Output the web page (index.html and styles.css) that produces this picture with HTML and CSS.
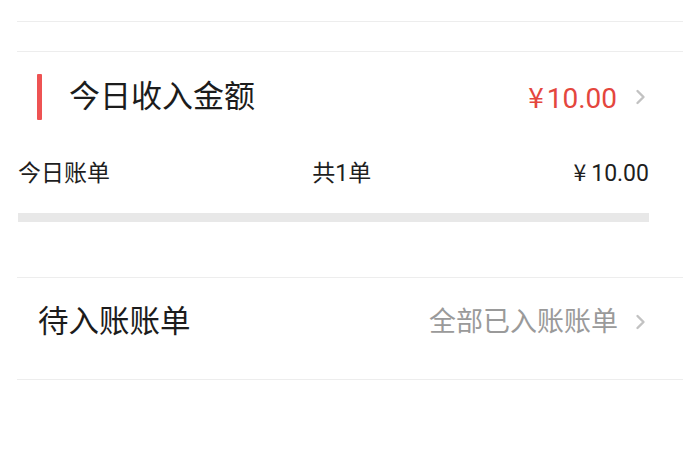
FILE: index.html
```html
<!DOCTYPE html>
<html lang="zh-CN">
<head>
<meta charset="utf-8">
<title>今日收入</title>
<link rel="stylesheet" href="styles.css">
</head>
<body>
<div class="page">
  <div class="divider first"></div>
  <div class="divider second"></div>

  <div class="income-row">
    <span class="accent-bar"></span>
    <span class="income-title">今日收入金额</span>
    <span class="income-amount"><span class="yen">¥</span>10.00</span>
    <svg class="chevron" width="11" height="16" viewBox="0 0 11 16"><polyline points="2.5,2 8.5,8 2.5,14" fill="none" stroke="#c2c2c2" stroke-width="2.4" stroke-linecap="round" stroke-linejoin="round"/></svg>
  </div>

  <div class="bill-block">
    <div class="bill-row">
      <span>今日账单</span>
      <span>共1单</span>
      <span><span class="yen">¥</span>10.00</span>
    </div>
    <div class="bill-bar"></div>
  </div>

  <div class="divider"></div>
  <div class="pending-row">
    <span class="pending-title">待入账账单</span>
    <span class="pending-status">全部已入账账单</span>
    <svg class="chevron" width="11" height="16" viewBox="0 0 11 16"><polyline points="2.5,2 8.5,8 2.5,14" fill="none" stroke="#c2c2c2" stroke-width="2.4" stroke-linecap="round" stroke-linejoin="round"/></svg>
  </div>
  <div class="divider"></div>
</div>
</body>
</html>
```

FILE: styles.css
```css
html, body {
  margin: 0;
  padding: 0;
  background: #ffffff;
}

body {
  font-family: Roboto, "Noto Sans CJK SC", sans-serif;
  color: #1e1e1e;
}

.page {
  padding: 0 17px;
}

.divider {
  height: 1px;
  background: #ededed;
}

.divider.first {
  margin-top: 21px;
}

.divider.second {
  margin-top: 29px;
}

.income-row {
  height: 90px;
  display: flex;
  align-items: center;
  padding: 0 37px 0 20px;
}

.accent-bar {
  width: 5px;
  height: 46px;
  background: #ee5353;
  border-radius: 1px;
}

.income-title {
  margin-left: 27px;
  font-size: 31px;
  line-height: 36px;
  color: #1c1c1c;
  flex: 1;
}

.income-amount {
  font-size: 28px;
  line-height: 36px;
  color: #e4463d;
  margin-right: 18px;
}

.yen {
  font-family: "Noto Sans CJK SC", sans-serif;
  margin-right: 3px;
}

.chevron {
  display: block;
  flex: none;
}

.bill-block {
  padding: 14px 34px 55px 1px;
}

.bill-row {
  display: flex;
  justify-content: space-between;
  align-items: center;
  height: 30px;
  font-size: 23px;
  color: #1e1e1e;
}

.bill-row .yen {
  margin-right: 5px;
}

.bill-bar {
  margin-top: 27px;
  height: 9px;
  background: #e8e8e8;
}

.pending-row {
  display: flex;
  align-items: center;
  padding: 29px 37px 42px 21px;
  height: 30px;
}

.pending-title {
  flex: 1;
  font-size: 30.5px;
  line-height: 30px;
  color: #1c1c1c;
}

.pending-status {
  font-size: 27px;
  line-height: 30px;
  color: #9a9a9a;
  margin-right: 17px;
}
```
